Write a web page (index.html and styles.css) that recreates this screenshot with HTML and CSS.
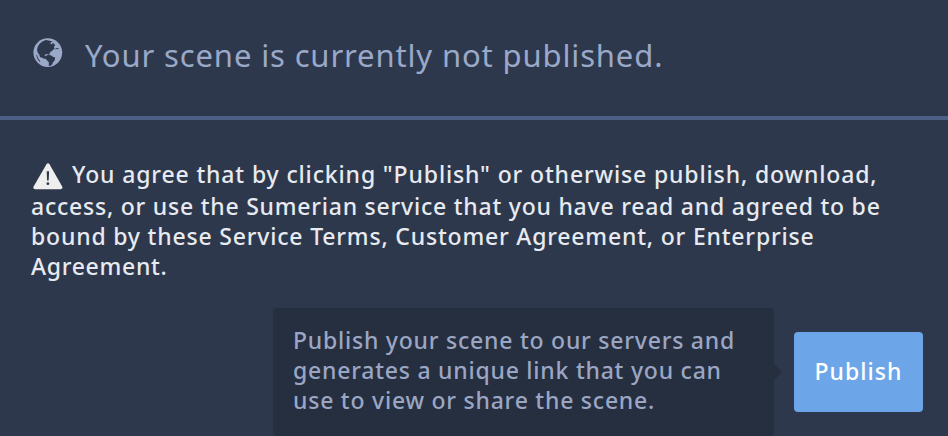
FILE: index.html
```html
<!DOCTYPE html>
<html lang="en">
<head>
<meta charset="utf-8">
<title>Publish scene</title>
<link rel="stylesheet" href="styles.css">
</head>
<body>
<header class="status">
  <svg class="globe" viewBox="0 0 30 30" aria-hidden="true">
    <circle cx="14.8" cy="14.6" r="14.4" fill="#9ba9c9"/>
    <path fill="#2e384c" d="M13 2 9.8 3.2 6.8 5.5 4.8 8.6 4 12l.8 2.8 1.4 1.7.8 2.4 2.4 1.2 2.6.8 2-1.6-1.9-.9-.5-1.5 1.7-.8 1.9.4 1 .7.7-2.7 3.1-2.4 1.7-1.5-1-2.1 1.5-.7-1.2-2.3-1.6-.6-.3 1.6-1.7-.8.6-1.7 2.1-.6z"/>
    <path fill="#2e384c" d="m12.1 18.1 2.8-1.2 3 .4 1.5 1.1 2.7 1.1-.3 2.7-1.8 2-.8 2.2-2.1 1.5-1.4-.4.2-3.2-2-2.1-1.6-2z"/>
    <path fill="#2e384c" d="m3 16.4 1.2 1.2.7 2.4 2.4 3.3-.4.6-2.5-3z"/>
    <path fill="#2e384c" d="m22 11 1.8-1 2.2.4-.6.8-1.6-.1-1.2.5z"/>
  </svg>
  <h1 class="status-text">Your scene is currently not published.</h1>
</header>
<main>
  <p class="terms">
    <span class="line first"><svg class="warn" viewBox="0 0 30 27" aria-hidden="true"><path fill="#eee" d="M13.5 1.2q1.5-2 3 0L29.2 23.5q.9 2.5-1.5 2.7H2Q-.3 26 .6 23.5z"/><path fill="#2e384c" d="M13.7 8.3h2.4l-.4 9.2h-1.6z"/><circle cx="14.9" cy="20.7" r="1.4" fill="#2e384c"/></svg><span class="t1">You agree that by clicking "Publish" or otherwise publish, download,</span></span>
    <span class="line t2">access, or use the Sumerian service that you have read and agreed to be</span>
    <span class="line t3">bound by these Service Terms, Customer Agreement, or Enterprise</span>
    <span class="line t4">Agreement.</span>
  </p>
  <div class="actions">
    <div class="hint">
      <span class="line">Publish your scene to our servers and</span>
      <span class="line">generates a unique link that you can</span>
      <span class="line">use to view or share the scene.</span>
    </div>
    <button class="publish">Publish</button>
  </div>
</main>
</body>
</html>
```
FILE: styles.css
```css
* { box-sizing: border-box; }
body {
  margin: 0;
  height: 436px;
  overflow: hidden;
  background: #2e384c;
  font-family: "Noto Sans", sans-serif;
}
.status {
  display: flex;
  height: 120px;
  padding: 38px 0 0 33px;
  border-bottom: 4px solid #4d5f85;
}
.globe { width: 30px; height: 30px; }
.status-text {
  margin: -3px 0 0 22px;
  font-size: 31px;
  line-height: 40px;
  font-weight: 400;
  color: #9ba9c9;
  white-space: nowrap;
  letter-spacing: 0.86px;
}
.terms {
  margin: 0;
  padding: 39px 0 0 31px;
  font-size: 23px;
  font-weight: 500;
  line-height: 30px;
  color: #e7eaf0;
}
.line { display: block; white-space: nowrap; }
.first { display: flex; height: 32px; }
.warn { width: 30px; height: 27px; margin: 4px 9px 0 2px; }
.t1 { letter-spacing: 0.86px; }
.t2 { letter-spacing: 0.77px; }
.t3 { letter-spacing: 0.81px; }
.t4 { letter-spacing: 0.7px; }
.actions {
  display: flex;
  margin-top: 27px;
  padding-left: 273px;
}
.hint {
  position: relative;
  width: 501px;
  height: 128px;
  padding: 17px 20px;
  border-radius: 4px;
  background: #262f3f;
  color: #9ba6c4;
  font-size: 23px;
  font-weight: 500;
  line-height: 30px;
  letter-spacing: 0.77px;
}
.hint::after {
  content: "";
  position: absolute;
  left: 100%;
  top: 56px;
  border: 8px solid transparent;
  border-left-color: #262f3f;
  border-right: 0;
}
.publish {
  width: 129px;
  height: 80px;
  margin: 24px 0 0 20px;
  padding: 0 0 2px;
  border: 0;
  border-radius: 4px;
  background: #6ca5e8;
  color: #fff;
  font: 500 23px/78px "Noto Sans", sans-serif;
  letter-spacing: 1.05px;
}
```
